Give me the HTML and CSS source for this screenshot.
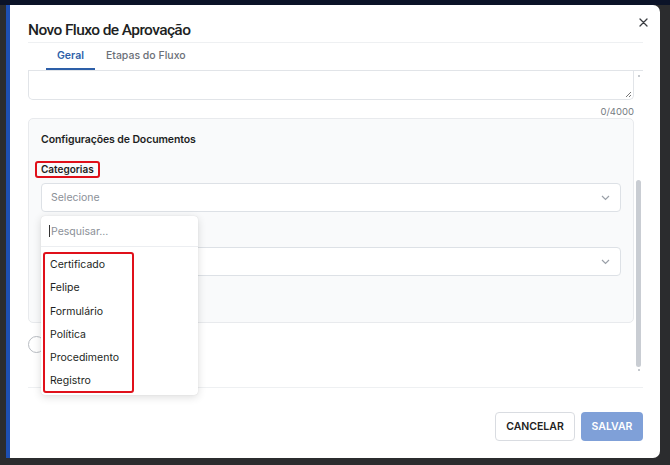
FILE: index.html
```html
<!DOCTYPE html>
<html lang="pt-BR">
<head>
  <meta charset="UTF-8">
  <meta name="viewport" content="width=device-width, initial-scale=1.0">
  <title>Novo Fluxo de Aprovação</title>
  <link rel="stylesheet" href="styles.css">
</head>
<body>
  <div class="topbar"></div>

  <div class="overlay">
    <div class="modal">
      <header class="modal-header">
        <h1>Novo Fluxo de Aprovação</h1>
        <button class="close" aria-label="Fechar">
          <svg width="9" height="9" viewBox="0 0 9 9"><path d="M1 1L8 8M8 1L1 8" stroke="#3a3d42" stroke-width="1.3" stroke-linecap="round"/></svg>
        </button>
      </header>

      <nav class="tabs">
        <a class="tab active" href="#">Geral</a>
        <a class="tab" href="#">Etapas do Fluxo</a>
      </nav>

      <div class="modal-body">
        <div class="scroll-content">
          <div class="textarea">
            <svg class="resize" width="7" height="7" viewBox="0 0 7 7"><path d="M6 1L1 6M6 4L4 6" stroke="#777" stroke-width="1"/></svg>
          </div>
          <div class="counter">0/4000</div>

          <section class="card">
            <h2>Configurações de Documentos</h2>

            <div class="field">
              <label class="label marked">Categorias</label>
              <div class="select">
                <span class="placeholder">Selecione</span>
                <svg width="9" height="6" viewBox="0 0 9 6"><path d="M1 1l3.5 3.5L8 1" fill="none" stroke="#9aa0a8" stroke-width="1.2"/></svg>
              </div>
            </div>

            <div class="field">
              <span class="label-space"></span>
              <div class="select">
                <span></span>
                <svg width="9" height="6" viewBox="0 0 9 6"><path d="M1 1l3.5 3.5L8 1" fill="none" stroke="#9aa0a8" stroke-width="1.2"/></svg>
              </div>
            </div>
          </section>

          <div class="toggle-row">
            <span class="radio"></span>
          </div>

          <!-- open dropdown of the Categorias select -->
          <div class="dropdown">
            <div class="search"><span class="caret"></span>Pesquisar...</div>
            <ul class="options marked">
              <li>Certificado</li>
              <li>Felipe</li>
              <li>Formulário</li>
              <li>Política</li>
              <li>Procedimento</li>
              <li>Registro</li>
            </ul>
          </div>
        </div>

        <div class="scrollbar">
          <span class="arrow"></span>
          <span class="thumb"></span>
          <span class="arrow"></span>
        </div>
      </div>

      <footer class="modal-footer">
        <button class="btn btn-outline">CANCELAR</button>
        <button class="btn btn-primary" disabled>SALVAR</button>
      </footer>
    </div>
  </div>
</body>
</html>
```

FILE: styles.css
```css
:root {
  --primary-color: #2d5fa8;
  --text-color: #1d1f23;
  --muted-color: #8b9098;
  --border-color: #e1e4e8;
  --mark-color: #e0101a;
}
* {
  box-sizing: border-box;
}
body {
  margin: 0;
  height: 465px;
  overflow: hidden;
  font-family: Inter, "Noto Sans", Arial, sans-serif;
  background-color: #2b2c2e;
  color: var(--text-color);
}
.topbar {
  height: 5px;
  background-color: #0b1328;
}
.overlay {
  padding: 0 10px 0 6px;
}
.modal {
  height: 453px;
  background: #fff;
  border-left: 4px solid #1d4fb2;
  border-radius: 0 7px 7px 0;
  display: flex;
  flex-direction: column;
  padding: 0 17px 0 18px;
}
.modal-header {
  height: 38px;
  display: flex;
  align-items: center;
  justify-content: space-between;
  border-bottom: 1px solid #eef0f2;
}
.modal-header h1 {
  margin: 0;
  padding-top: 12px;
  font-family: Roboto, Inter, Arial, sans-serif;
  font-size: 15.5px;
  font-weight: 500;
  letter-spacing: -0.6px;
}
.close {
  border: 0;
  background: none;
  padding: 0;
  margin: 0 -5px 2px 0;
  width: 9px;
  height: 9px;
  display: flex;
}
.tabs {
  display: flex;
  height: 28px;
  padding-left: 18px;
  border-bottom: 1px solid var(--border-color);
}
.tab {
  display: flex;
  align-items: center;
  padding: 0 11px;
  font-size: 10.5px;
  font-weight: 500;
  color: #6b7078;
  text-decoration: none;
  border-bottom: 2px solid transparent;
}
.tab.active {
  color: var(--primary-color);
  font-weight: 600;
  border-bottom-color: var(--primary-color);
}
.modal-body {
  position: relative;
  z-index: 1;
  flex: 1;
  display: flex;
  border-bottom: 1px solid #eef0f2;
}
.scroll-content {
  position: relative;
  flex: 1;
}
.textarea {
  position: relative;
  height: 29px;
  border: 1px solid var(--border-color);
  border-top: 0;
  border-radius: 0 0 5px 5px;
}
.resize {
  position: absolute;
  right: 1px;
  bottom: 1px;
}
.counter {
  text-align: right;
  font-size: 9.5px;
  color: #767b83;
  padding: 6px 0 0;
  height: 18px;
}
.card {
  height: 205px;
  background-color: #f9fafb;
  border: 1px solid #e8eaed;
  border-radius: 5px;
  padding: 14px 12px 0 12px;
}
.card h2 {
  margin: 0 0 11px;
  font-size: 10.5px;
  font-weight: 600;
  letter-spacing: -0.1px;
}
.field {
  margin-bottom: 8px;
}
.label {
  display: inline-block;
  font-size: 10px;
  font-weight: 600;
  line-height: 13px;
  margin-bottom: 5px;
}
.label.marked {
  border: 2px solid var(--mark-color);
  border-radius: 3px;
  padding: 0 4px;
  margin-left: -6px;
}
.label-space {
  display: block;
  height: 27px;
}
.select {
  height: 29px;
  background: #fff;
  border: 1px solid #dde1e6;
  border-radius: 4px;
  display: flex;
  align-items: center;
  justify-content: space-between;
  padding: 0 10px 0 9px;
}
.placeholder {
  font-size: 10.5px;
  color: var(--muted-color);
}
.toggle-row {
  padding-top: 13px;
}
.radio {
  display: block;
  width: 17px;
  height: 17px;
  border: 1px solid #b8bcc2;
  border-radius: 50%;
}
.dropdown {
  position: absolute;
  left: 13px;
  top: 145px;
  width: 157px;
  height: 179px;
  background: #fff;
  border-radius: 4px;
  box-shadow: 0 2px 8px rgba(0, 0, 0, 0.14), 0 0 1px rgba(0, 0, 0, 0.15);
}
.search {
  height: 31px;
  display: flex;
  align-items: center;
  padding-left: 8px;
  font-size: 10.5px;
  color: var(--muted-color);
  border-bottom: 1px solid #eceef1;
}
.caret {
  width: 1px;
  height: 12px;
  background: #333;
  margin-right: 1px;
}
.options {
  list-style: none;
  margin: 5px 0 0 2px;
  padding: 0 0 0 5px;
  width: 91px;
  height: 141px;
}
.options.marked {
  border: 2px solid var(--mark-color);
  border-radius: 3px;
}
.options li {
  height: 23.3px;
  line-height: 21px;
  font-size: 10.5px;
}
.scrollbar {
  width: 9px;
  display: flex;
  flex-direction: column;
  align-items: center;
  padding: 4px 0 16px;
}
.arrow {
  width: 2px;
  height: 2px;
  background: #c5c9ce;
}
.thumb {
  width: 5px;
  margin: 103px 0 2px;
  flex: 1;
  background: #c9cdd3;
  border-radius: 3px;
}
.modal-footer {
  height: 70px;
  display: flex;
  justify-content: flex-end;
  align-items: flex-start;
  gap: 6px;
  padding-top: 24px;
}
.btn {
  height: 29px;
  border-radius: 4px;
  font-family: inherit;
  font-size: 10.5px;
  font-weight: 600;
  padding: 0 10px;
}
.btn-outline {
  width: 80px;
  background: #fff;
  border: 1px solid #d9dce1;
  color: #222;
}
.btn-primary {
  width: 62px;
  background: #7fa0d8;
  border: 0;
  color: #fff;
}
```
